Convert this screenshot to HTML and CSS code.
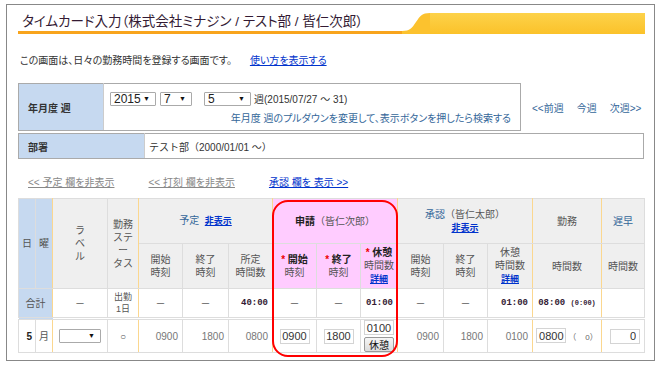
FILE: index.html
```html
<!DOCTYPE html>
<html>
<head>
	<meta charset="utf-8">
	<title>タイムカード入力</title>
	<link rel="stylesheet" href="styles.css">
</head>
<body>
<div class="page">
	<div class="titlebar">
		<h1>タイムカード入力（株式会社ミナジン / テスト部 / 皆仁次郎）</h1>
		<svg class="curve" width="28" height="21" viewBox="0 0 28 21" preserveAspectRatio="none">
			<path d="M0 18 C8 18 10 15 14 9 C18 3 20 0 28 0 L28 21 L0 21 Z" fill="#fcc22e"/>
		</svg>
		<div class="band"></div>
	</div>

	<p class="intro">この画面は、日々の勤務時間を登録する画面です。<a href="#">使い方を表示する</a></p>

	<div class="search">
		<table class="form week">
			<tr>
				<th>年月度 週</th>
				<td>
					<div class="pick">
						<label class="sel w46"><select><option>2015</option></select></label>
						<label class="sel w32"><select><option>7</option></select></label>
						<label class="sel w47"><select><option>5</option></select></label>
						<span class="range">週(2015/07/27 ～ 31)</span>
					</div>
					<div class="hint">年月度 週のプルダウンを変更して、表示ボタンを押したら検索する</div>
				</td>
			</tr>
		</table>
		<div class="nav"><a href="#">&lt;&lt;前週</a><a href="#">今週</a><a href="#">次週&gt;&gt;</a></div>
	</div>

	<table class="form dept">
		<tr>
			<th>部署</th>
			<td>テスト部（2000/01/01 ～）</td>
		</tr>
	</table>

	<div class="toggles">
		<a href="#" class="off">&lt;&lt; 予定 欄を非表示</a>
		<a href="#" class="off">&lt;&lt; 打刻 欄を非表示</a>
		<a href="#">承認 欄を 表示 &gt;&gt;</a>
	</div>

	<div class="gridwrap">
		<table class="grid">
			<colgroup>
				<col style="width:17px"><col style="width:17px"><col style="width:55px"><col style="width:31px">
				<col style="width:44px"><col style="width:46px"><col style="width:44px">
				<col style="width:44px"><col style="width:44px"><col style="width:37px">
				<col style="width:46px"><col style="width:44px"><col style="width:45px">
				<col style="width:69px"><col style="width:43px">
			</colgroup>
			<tr class="head1">
				<th rowspan="2" class="blue">日</th>
				<th rowspan="2" class="blue ob">曜</th>
				<th rowspan="2">ラ<br>ベ<br>ル</th>
				<th rowspan="2" class="ob">勤務<br>ステ<br>ー<br>タス</th>
				<th colspan="3" class="ob"><span class="grp">予定</span>&nbsp;&nbsp;<a href="#">非表示</a></th>
				<th colspan="3" class="pink ob"><b>申請</b>（皆仁次郎）</th>
				<th colspan="3" class="ob"><span class="grp">承認</span>（皆仁太郎）<br><a href="#">非表示</a></th>
				<th class="ob">勤務</th>
				<th><span class="grp">遅早</span></th>
			</tr>
			<tr class="head2">
				<th>開始<br>時刻</th>
				<th>終了<br>時刻</th>
				<th class="ob">所定<br>時間数</th>
				<th class="pink"><span class="req">*</span> <b>開始</b><br>時刻</th>
				<th class="pink"><span class="req">*</span> <b>終了</b><br>時刻</th>
				<th class="pink ob"><span class="req">*</span> <b>休憩</b><br>時間数<br><a href="#">詳細</a></th>
				<th>開始<br>時刻</th>
				<th>終了<br>時刻</th>
				<th class="ob">休憩<br>時間数<br><a href="#">詳細</a></th>
				<th class="ob">時間数</th>
				<th>時間数</th>
			</tr>
			<tr class="sum">
				<td colspan="2" class="blue ob">合計</td>
				<td>－</td>
				<td class="ob tiny">出勤<br>1日</td>
				<td>－</td>
				<td>－</td>
				<td class="num total ob">40:00</td>
				<td>－</td>
				<td>－</td>
				<td class="num total ob">01:00</td>
				<td>－</td>
				<td>－</td>
				<td class="num total ob">01:00</td>
				<td class="total ob">08:00 <small>(0:00)</small></td>
				<td></td>
			</tr>
			<tr class="day">
				<td class="date">5</td>
				<td class="ob">月</td>
				<td><label class="sel w42"><select><option></option></select></label></td>
				<td class="ob">○</td>
				<td class="num">0900</td>
				<td class="num">1800</td>
				<td class="num ob">0800</td>
				<td><input class="time" value="0900"></td>
				<td><input class="time" value="1800"></td>
				<td class="ob brk"><input class="time" value="0100"><button>休憩</button></td>
				<td class="num">0900</td>
				<td class="num">1800</td>
				<td class="num ob">0100</td>
				<td class="ob work"><input class="time" value="0800"><span class="paren">（&nbsp;&nbsp;&nbsp;&nbsp;0）</span></td>
				<td class="num"><input class="time right" value="0"></td>
			</tr>
		</table>
		<div class="ring"></div>
	</div>
</div>
</body>
</html>
```

FILE: styles.css
```css
body {
	margin: 0;
	font-family: "Liberation Sans", "Noto Sans CJK JP", sans-serif;
	font-size: 10px;
	color: #333;
}
a {
	color: #0033cc;
}
.page {
	box-sizing: border-box;
	width: 649px;
	height: 357px;
	margin: 4px 6px;
	border: 1px solid #888;
	padding: 8px 9px 0 11px;
}
.titlebar {
	display: flex;
	align-items: flex-end;
	height: 21px;
}
h1 {
	flex: 0 0 384px;
	box-sizing: border-box;
	margin: 0;
	padding-left: 4px;
	font-size: 13.5px;
	font-weight: normal;
	line-height: 18px;
	color: #331a33;
	font-feature-settings: "palt";
	border-bottom: 3px solid #f8a41c;
	white-space: nowrap;
}
.curve {
	display: block;
	flex: 0 0 28px;
}
.band {
	flex: 1;
	height: 21px;
	background: linear-gradient(#fdd24a, #fbc22a);
}
.intro {
	margin: 20px 0 0 2px;
	line-height: 14px;
	font-size: 10px;
	font-feature-settings: "palt";
}
.intro a {
	margin-left: 18px;
}
.search {
	display: flex;
	align-items: center;
	margin-top: 15px;
}
table.form {
	border-collapse: collapse;
	font-size: 10px;
}
.form th {
	background: #c6d9f0;
	text-align: left;
	padding: 0 0 0 9px;
	border: 1px solid #aaa;
	border-right: 1px solid #ccc;
	font-weight: bold;
}
.form td {
	border: 1px solid #aaa;
	border-left: none;
	padding: 0;
}
.week {
	width: 503px;
	height: 43px;
}
.week th {
	width: 75px;
}
.pick {
	display: flex;
	align-items: center;
	gap: 4px;
	padding: 7px 0 0 6px;
}
.pick .w47 {
	margin-left: 8px;
}
.range {
	margin-left: -1px;
	font-size: 10px;
}
.hint {
	text-align: right;
	padding: 4px 9px 5px 0;
	color: #336699;
	font-feature-settings: "palt";
}
.sel {
	position: relative;
	display: inline-block;
}
.sel select {
	appearance: none;
	-webkit-appearance: none;
	box-sizing: border-box;
	width: 100%;
	height: 14px;
	padding: 0 0 0 3px;
	border: 1px solid #aaa;
	border-radius: 1px;
	background: #fff;
	font-family: "Liberation Sans", sans-serif;
	font-size: 12px;
	line-height: 12px;
	color: #222;
}
.sel::after {
	content: "▼";
	position: absolute;
	right: 6px;
	top: 2px;
	font-size: 7px;
	line-height: 10px;
	color: #111;
	pointer-events: none;
}
.w46 { width: 46px; }
.w32 { width: 32px; }
.w47 { width: 47px; }
.w42 { width: 42px; }
.nav {
	display: flex;
	gap: 13px;
	margin-left: 11px;
	font-feature-settings: "palt";
}
.nav a {
	color: #336699;
	text-decoration: none;
}
.dept {
	width: 626px;
	height: 26px;
	margin-top: 2px;
}
.dept th {
	width: 116px;
}
.dept td {
	padding-left: 4px;
}
.toggles {
	display: flex;
	gap: 34px;
	margin: 17px 0 0 10px;
	line-height: 14px;
	font-feature-settings: "palt";
}
.toggles a.off {
	color: #888;
}
.gridwrap {
	position: relative;
	margin-top: 8px;
	width: 626px;
}
.grid {
	width: 626px;
	table-layout: fixed;
	border-collapse: collapse;
	font-size: 10px;
}
.grid th,
.grid td {
	border: 1px solid #ddd;
	padding: 0;
	text-align: center;
	line-height: 13px;
	color: #555;
}
.grid th {
	background: #efefef;
	font-weight: normal;
}
.grid .blue {
	background: #c6d9f0;
}
.grid .pink {
	background: #ffccff;
}
.grid .ob {
	border-right: 1px solid #fbd78f;
}
.head1 {
	height: 45px;
}
.head2 {
	height: 45px;
}
.grp {
	color: #336699;
}
.grid th a {
	font-weight: bold;
	font-size: 9px;
}
.grid th b {
	font-weight: bold;
	color: #222;
}
.req {
	color: #e00;
	font-weight: bold;
}
.sum {
	height: 30px;
}
.sum td.tiny {
	font-size: 9px;
	line-height: 12px;
}
.grid .num {
	text-align: right;
	padding-right: 4px;
	color: #777;
}
.grid .total {
	font-family: "Liberation Mono", monospace;
	font-weight: bold;
	font-size: 9px;
	color: #331a33;
}
.grid td.num.total {
	padding-right: 4px;
	color: #331a33;
}
.total small {
	font-size: 7px;
}
.day {
	height: 33px;
}
.day td {
	border-top: 3px double #ddd;
}
.grid .date {
	font-weight: bold;
	color: #222;
	text-align: right;
	padding-right: 3px;
}
input.time {
	box-sizing: border-box;
	width: 30px;
	height: 15px;
	padding: 0 1px;
	border: 1px solid #d4d4d4;
	font-family: "Liberation Sans", sans-serif;
	font-size: 11px;
	text-align: center;
	color: #333;
}
input.right {
	text-align: right;
	padding-right: 3px;
}
.brk {
	line-height: 0;
}
.brk input,
.brk button {
	display: block;
	margin: 0 auto;
}
.brk button {
	box-sizing: border-box;
	width: 30px;
	height: 15px;
	margin-top: 2px;
	padding: 0;
	border: 1px solid #999;
	border-radius: 2px;
	background: linear-gradient(#f6f6f6, #dcdcdc);
	font-family: "Noto Sans CJK JP", sans-serif;
	font-size: 10px;
	line-height: 12px;
	color: #111;
}
.work {
	text-align: left;
	padding-left: 5px;
	white-space: nowrap;
}
.paren {
	font-size: 8px;
	color: #666;
	margin-left: 2px;
}
.ring {
	position: absolute;
	left: 254px;
	top: 2px;
	width: 126px;
	height: 157px;
	box-sizing: border-box;
	border: 2px solid #f00;
	border-radius: 16px;
	pointer-events: none;
}
```
